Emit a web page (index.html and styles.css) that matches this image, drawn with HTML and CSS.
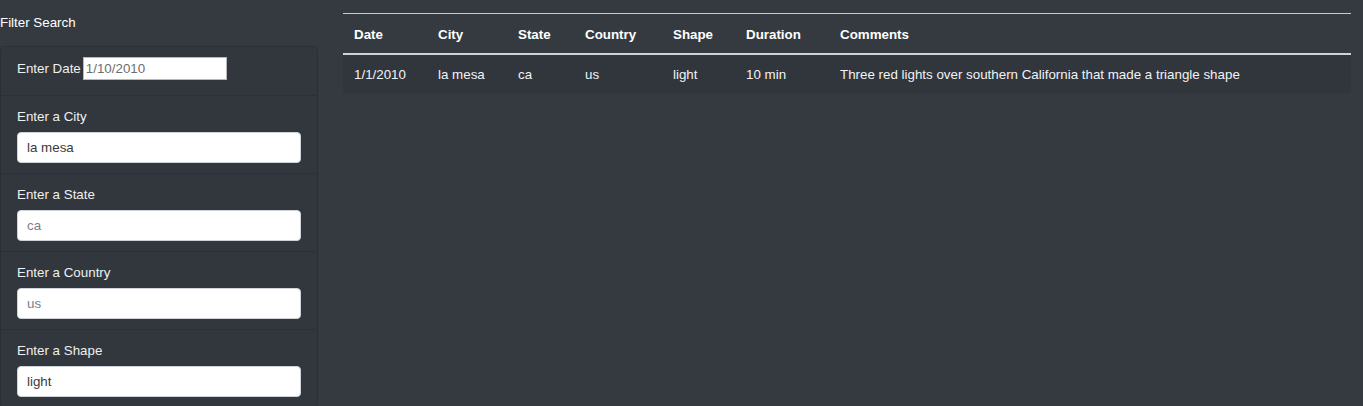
FILE: index.html
```html
<!DOCTYPE html>
<html lang="en">
<head>
<meta charset="utf-8">
<title>UFO Sightings</title>
<link rel="stylesheet" href="styles.css">
</head>
<body>
<div class="page">
  <aside class="filters">
    <div class="filters-title">Filter Search</div>
    <ul class="filter-list">
      <li class="filter-item filter-inline">
        <label for="datetime">Enter Date</label>
        <input class="date-input" id="datetime" type="text" value="1/10/2010">
      </li>
      <li class="filter-item">
        <label for="city">Enter a City</label>
        <input class="text-input" id="city" type="text" value="la mesa">
      </li>
      <li class="filter-item">
        <label for="state">Enter a State</label>
        <input class="text-input" id="state" type="text" placeholder="ca">
      </li>
      <li class="filter-item">
        <label for="country">Enter a Country</label>
        <input class="text-input" id="country" type="text" placeholder="us">
      </li>
      <li class="filter-item">
        <label for="shape">Enter a Shape</label>
        <input class="text-input" id="shape" type="text" value="light">
      </li>
    </ul>
  </aside>
  <main class="results">
    <table class="ufo-table">
      <thead>
        <tr>
          <th class="c-date">Date</th>
          <th class="c-city">City</th>
          <th class="c-state">State</th>
          <th class="c-country">Country</th>
          <th class="c-shape">Shape</th>
          <th class="c-duration">Duration</th>
          <th>Comments</th>
        </tr>
      </thead>
      <tbody>
        <tr>
          <td>1/1/2010</td>
          <td>la mesa</td>
          <td>ca</td>
          <td>us</td>
          <td>light</td>
          <td>10 min</td>
          <td>Three red lights over southern California that made a triangle shape</td>
        </tr>
      </tbody>
    </table>
  </main>
</div>
</body>
</html>
```
FILE: styles.css
```css
* { box-sizing: border-box; }

html, body {
  margin: 0;
  padding: 0;
  background: #353a41;
  color: #f4f5f6;
  font-family: "Liberation Sans", Arial, Helvetica, sans-serif;
  font-size: 13.35px;
  line-height: 17px;
  height: 100%;
}

.page {
  display: grid;
  grid-template-columns: 318px 1008px;
  column-gap: 25px;
  align-items: start;
}

.filters-title {
  padding-top: 14px;
  height: 46px;
  color: #fff;
}

.filter-list {
  list-style: none;
  margin: 0;
  padding: 0;
  background: #32363d;
  border: 1px solid #2c3036;
  border-radius: 4px;
}

.filter-item {
  display: flex;
  flex-direction: column;
  padding: 12px 16px 10px;
  border-top: 1px solid #2d3137;
}

.filter-item:first-child { border-top: none; }

.filter-item label {
  color: #eef0f2;
  margin-bottom: 7px;
}

.filter-inline {
  flex-direction: row;
  align-items: center;
  padding: 10px 16px 15px;
}

.filter-inline label {
  margin: 0 2px 0 0;
}

.date-input {
  width: 144px;
  height: 23px;
  border: 1px solid #b8b8b8;
  border-radius: 0;
  padding: 0 2px;
  font: inherit;
  color: #6d6d6d;
  background: #fff;
}

.text-input {
  width: 284px;
  height: 31px;
  border: 1px solid #ced4da;
  border-radius: 4px;
  padding: 0 9px;
  font: inherit;
  color: #3a3a3a;
  background: #fff;
}

.text-input::placeholder { color: #7b8087; opacity: 1; }

.results { padding-top: 13px; }

.ufo-table {
  width: 100%;
  border-collapse: collapse;
  border-top: 1px solid #c8cacc;
}

.ufo-table th {
  text-align: left;
  font-weight: bold;
  color: #fff;
  padding: 12px 11px 10px;
  border-bottom: 2px solid #d0d2d4;
}

.ufo-table td {
  padding: 11px 11px 10px;
  color: #f2f3f4;
  background: #31353c;
}

.c-date { width: 84px; }
.c-city { width: 80px; }
.c-state { width: 67px; }
.c-country { width: 88px; }
.c-shape { width: 73px; }
.c-duration { width: 94px; }
```
